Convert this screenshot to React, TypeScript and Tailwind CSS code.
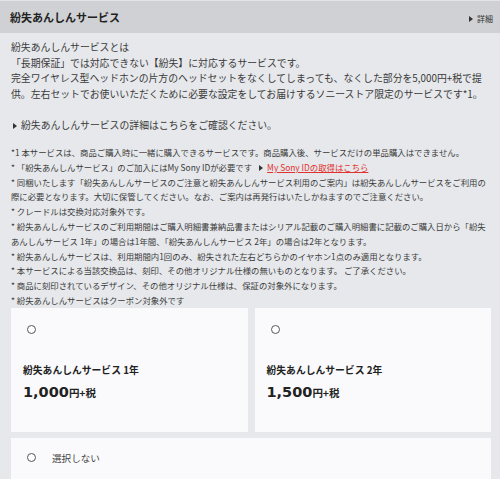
const Tri = ({ className = '' }: { className?: string }) => (
  <svg viewBox="0 0 4 6" className={`inline-block w-[4px] h-[6px] ${className}`}>
    <path d="M0 0 L4 3 L0 6 Z" fill="#333" />
  </svg>
)

const Radio = () => (
  <span className="block w-[9px] h-[9px] rounded-full border border-[#555] bg-white shrink-0" />
)

const notes: React.ReactNode[] = [
  '*1 本サービスは、商品ご購入時に一緒に購入できるサービスです。商品購入後、サービスだけの単品購入はできません。',
  <>
    * 「紛失あんしんサービス」のご加入にはMy Sony IDが必要です
    <Tri className="ml-[7px] mr-[4px] align-middle" />
    <a className="text-[#e0322f] underline">My Sony IDの取得はこちら</a>
  </>,
  '* 同梱いたします「紛失あんしんサービスのご注意と紛失あんしんサービス利用のご案内」は紛失あんしんサービスをご利用の',
  '際に必要となります。大切に保管してください。なお、ご案内は再発行はいたしかねますのでご注意ください。',
  '* クレードルは交換対応対象外です。',
  '* 紛失あんしんサービスのご利用期間はご購入明細書兼納品書またはシリアル記載のご購入明細書に記載のご購入日から「紛失',
  'あんしんサービス 1年」の場合は1年間、「紛失あんしんサービス 2年」の場合は2年となります。',
  '* 紛失あんしんサービスは、利用期間内1回のみ、紛失された左右どちらかのイヤホン1点のみ適用となります。',
  '* 本サービスによる当該交換品は、刻印、その他オリジナル仕様の無いものとなります。 ご了承ください。',
  '* 商品に刻印されているデザイン、その他オリジナル仕様は、保証の対象外になります。',
  '* 紛失あんしんサービスはクーポン対象外です',
]

const PlanCard = ({ title, price }: { title: string; price: string }) => (
  <div className="h-[124px] bg-[#fafafc] pl-[12px]">
    <div className="pt-[17px] pl-[4px]">
      <Radio />
    </div>
    <div className="mt-[30px] text-[9.8px] leading-[13px] font-bold text-[#222]">{title}</div>
    <div className="mt-[4px] leading-[18px] font-bold text-[#222]">
      <span className="font-['DejaVu_Sans',sans-serif] text-[14.5px]">{price}</span>
      <span className="text-[10.5px]">円+税</span>
    </div>
  </div>
)

export default function App() {
  return (
    <div className="w-[500px] h-[479px] overflow-hidden bg-[#e6e8eb] text-[#3a3a3a] font-['Noto_Sans_CJK_JP','Noto_Sans',sans-serif]">
      <div className="h-[33px] bg-[#cfd1d4] border-t border-[#e3e4e6] flex items-center justify-between pl-[10px] pr-[7px]">
        <h1 className="text-[11px] font-bold text-[#222]">紛失あんしんサービス</h1>
        <span className="flex items-center gap-[4px] text-[8px] mt-[3px] text-[#333]">
          <Tri />
          詳細
        </span>
      </div>

      <div className="px-[11px] pt-[7px]">
        <p className="text-[9.85px] leading-[15.6px] whitespace-nowrap">
          紛失あんしんサービスとは
          <br />
          「長期保証」では対応できない【紛失】に対応するサービスです。
          <br />
          完全ワイヤレス型ヘッドホンの片方のヘッドセットをなくしてしまっても、なくした部分を5,000円+税で提
          <br />
          供。左右セットでお使いいただくために必要な設定をしてお届けするソニーストア限定のサービスです*1。
        </p>

        <p className="mt-[16px] text-[9.85px] leading-[15.6px] flex items-center">
          <Tri className="ml-[2px] mr-[4px]" />
          紛失あんしんサービスの詳細はこちらをご確認ください。
        </p>

        <ul className="mt-[11px] text-[8.4px] leading-[14.8px] whitespace-nowrap">
          {notes.map((n, i) => (
            <li key={i}>{n}</li>
          ))}
        </ul>

        <div className="grid grid-cols-2 gap-[7px] w-[480px]">
          <PlanCard title="紛失あんしんサービス 1年" price="1,000" />
          <PlanCard title="紛失あんしんサービス 2年" price="1,500" />
        </div>

        <div className="mt-[6px] w-[480px] h-[60px] bg-[#fafafc] flex items-start pt-[14px] pl-[16px]">
          <div className="pt-[1px]">
            <Radio />
          </div>
          <span className="ml-[16px] text-[9.6px] leading-[12px] text-[#444]">選択しない</span>
        </div>
      </div>
    </div>
  )
}
